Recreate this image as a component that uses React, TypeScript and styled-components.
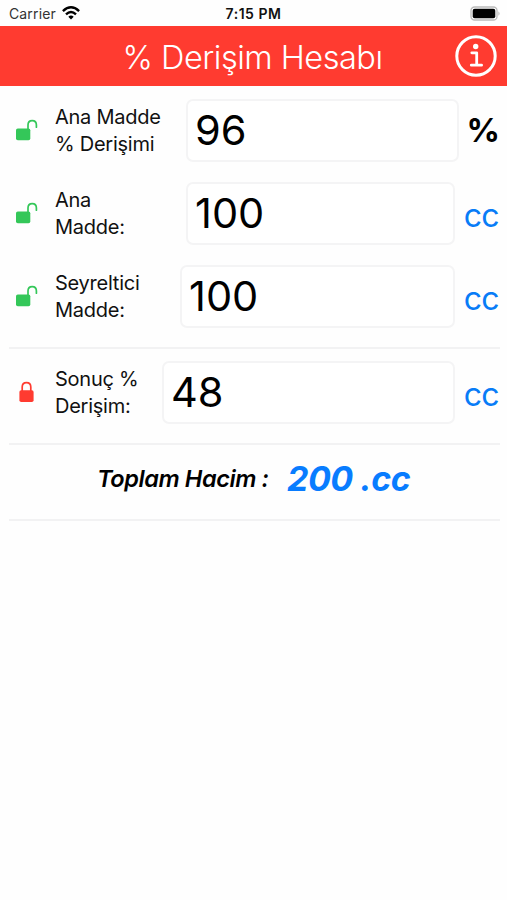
import React from "react";
import styled, { createGlobalStyle } from "styled-components";

const GlobalStyle = createGlobalStyle`
  * { box-sizing: border-box; }
  body { margin: 0; background: #fff; font-family: Inter, "Liberation Sans", sans-serif; color: #111; }
`;

const Screen = styled.div`
  width: 507px;
  height: 900px;
  overflow: hidden;
  background: #fefefe;
`;

const StatusBar = styled.div`
  display: grid;
  grid-template-columns: 1fr auto 1fr;
  align-items: center;
  height: 26px;
  padding: 0 6px 0 9px;
  font-size: 14px;
`;

const Carrier = styled.div`
  display: flex;
  align-items: center;
  gap: 6px;
  color: #333;
  letter-spacing: 0.14px;
`;

const Clock = styled.div`
  margin-right: 3px;
  font-size: 14px;
  font-weight: 600;
  letter-spacing: 0.5px;
`;

const BatterySlot = styled.div`
  display: flex;
  justify-content: flex-end;
`;

const Header = styled.header`
  display: grid;
  grid-template-columns: 1fr auto 1fr;
  align-items: center;
  height: 60px;
  padding: 0 10px 0 9px;
  background: #ff3b30;
  color: #fff;
`;

const Title = styled.h1`
  grid-column: 2;
  margin: 0 1px 0 0;
  padding-top: 2px;
  font-size: 32.5px;
  font-weight: 350;
  letter-spacing: -0.5px;
  white-space: nowrap;
`;

const InfoButton = styled.button`
  justify-self: end;
  display: flex;
  padding: 0;
  border: 0;
  background: none;
`;

const Content = styled.main`
  padding: 13px 7px 0 9px;
`;

const Section = styled.section<{ $height: number }>`
  display: flex;
  flex-direction: column;
  gap: 21px;
  height: ${(p) => p.$height}px;
  border-bottom: 2px solid #f2f2f3;
`;

const Row = styled.div`
  display: flex;
  align-items: center;
  height: 62px;
`;

const LockSlot = styled.div`
  width: 46px;
  padding-left: 6px;
  display: flex;
`;

const Label = styled.label<{ $width: number }>`
  width: ${(p) => p.$width}px;
  flex: none;
  padding-top: 2px;
  font-size: 20px;
  line-height: 27px;
  letter-spacing: -0.25px;
  white-space: pre-line;
`;

const Field = styled.input`
  flex: 1;
  min-width: 0;
  height: 63px;
  padding: 0 8px 0 7px;
  border: 2px solid #f4f4f5;
  border-radius: 7px;
  outline: none;
  background: #fff;
  color: #000;
  font: 400 41.5px Inter, "Liberation Sans", sans-serif;
`;

const Unit = styled.span<{ $bold?: boolean }>`
  flex: none;
  width: ${(p) => (p.$bold ? 41 : 45)}px;
  padding-top: ${(p) => (p.$bold ? 0 : 4)}px;
  padding-right: ${(p) => (p.$bold ? 0 : 1)}px;
  text-align: right;
  font-size: ${(p) => (p.$bold ? 33 : 32)}px;
  font-weight: ${(p) => (p.$bold ? 650 : 430)};
  letter-spacing: ${(p) => (p.$bold ? 0 : -0.6)}px;
  color: ${(p) => (p.$bold ? "#000" : "#087cf7")};
`;

const Total = styled.section`
  display: flex;
  align-items: center;
  height: 76px;
  padding: 0 0 8px 88px;
  border-bottom: 2px solid #f2f2f3;
  font-style: italic;
  white-space: nowrap;
`;

const TotalLabel = styled.span`
  width: 190px;
  font-size: 23.5px;
  font-weight: 600;
  letter-spacing: -0.4px;
  color: #000;
`;

const TotalValue = styled.strong`
  font-size: 34px;
  font-weight: 700;
  letter-spacing: -0.5px;
  color: #087cff;
`;

const Wifi = () => (
  <svg width="18" height="14" viewBox="0 0 18 14" fill="none" stroke="#000" strokeWidth="2.4">
    <path d="M.9 5.1Q9-2.4 17.1 5.1" />
    <path d="M4 8.4Q9 3.7 14 8.4" />
    <path d="M6.3 10.8Q9 8.2 11.7 10.8L9 13.6Z" fill="#000" stroke="none" />
  </svg>
);

const Battery = () => (
  <svg width="31" height="15" viewBox="0 0 31 15">
    <rect x="1" y="1" width="26" height="13" rx="3.6" fill="#fff" stroke="#bbb" strokeWidth="1.3" />
    <rect x="2.7" y="2.7" width="22.6" height="9.6" rx="2" fill="#000" />
    <path d="M28.5 5.2Q30.5 7.5 28.5 9.8Z" fill="#aaa" />
  </svg>
);

const Info = () => (
  <svg width="42" height="42" viewBox="0 0 42 42" fill="none" stroke="#fff">
    <circle cx="21" cy="21" r="19.2" strokeWidth="3" />
    <circle cx="20.7" cy="11.5" r="2.7" fill="#fff" stroke="none" />
    <path d="M16.8 17.8H21.7V30M16.3 30.2H26.6" strokeWidth="2.8" strokeLinecap="round" strokeLinejoin="round" />
  </svg>
);

const Lock = ({ open }: { open: boolean }) =>
  open ? (
    <svg width="24" height="22" viewBox="0 0 24 22">
      <rect x="1" y="9.4" width="14.3" height="11.8" rx="1.8" fill="#34c759" />
      <path d="M13 10V6Q13 1.6 17.2 1.6Q21.4 1.6 21.4 6V8.2" fill="none" stroke="#34c759" strokeWidth="1.7" strokeLinecap="round" />
    </svg>
  ) : (
    <svg width="24" height="22" viewBox="0 0 24 22">
      <rect x="4.4" y="9.2" width="14.2" height="11.8" rx="1.8" fill="#ff3b30" />
      <path d="M7.2 10V6Q7.2 1.6 11.5 1.6Q15.8 1.6 15.8 6V10" fill="none" stroke="#ff3b30" strokeWidth="1.7" />
    </svg>
  );

type RowData = { label: string; width: number; value: string; unit: string; open: boolean };

const inputs: RowData[] = [
  { label: "Ana Madde\n% Derişimi", width: 131, value: "96", unit: "%", open: true },
  { label: "Ana\nMadde:", width: 131, value: "100", unit: "cc", open: true },
  { label: "Seyreltici\nMadde:", width: 125, value: "100", unit: "cc", open: true },
];

const result: RowData = { label: "Sonuç %\nDerişim:", width: 107, value: "48", unit: "cc", open: false };

const Entry = ({ label, width, value, unit, open }: RowData) => (
  <Row>
    <LockSlot>
      <Lock open={open} />
    </LockSlot>
    <Label $width={width}>{label}</Label>
    <Field defaultValue={value} />
    <Unit $bold={unit === "%"}>{unit}</Unit>
  </Row>
);

const ResultSection = styled(Section)`
  padding-top: 12px;
`;

export default function App() {
  return (
    <Screen>
      <GlobalStyle />
      <StatusBar>
        <Carrier>
          Carrier <Wifi />
        </Carrier>
        <Clock>7:15 PM</Clock>
        <BatterySlot>
          <Battery />
        </BatterySlot>
      </StatusBar>
      <Header>
        <Title>% Derişim Hesabı</Title>
        <InfoButton aria-label="Info">
          <Info />
        </InfoButton>
      </Header>
      <Content>
        <Section $height={250}>
          {inputs.map((r) => (
            <Entry key={r.label} {...r} />
          ))}
        </Section>
        <ResultSection $height={96}>
          <Entry {...result} />
        </ResultSection>
        <Total>
          <TotalLabel>Toplam Hacim :</TotalLabel>
          <TotalValue>200 .cc</TotalValue>
        </Total>
      </Content>
    </Screen>
  );
}
